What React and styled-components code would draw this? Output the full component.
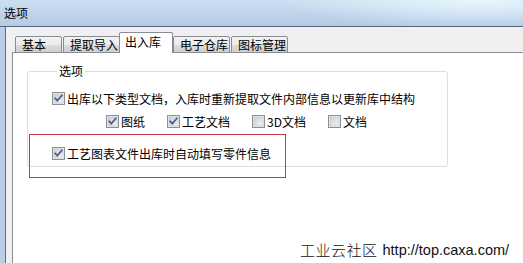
import React from 'react';
import styled, { createGlobalStyle } from 'styled-components';

const GlobalStyle = createGlobalStyle`
  html, body {
    margin: 0;
    padding: 0;
    width: 523px;
    height: 263px;
    overflow: hidden;
    background: #ffffff;
  }
  body {
    font-family: "Noto Sans CJK SC", "Liberation Sans", sans-serif;
    font-size: 12px;
    color: #000;
  }
`;

// ventana principal
const Window = styled.div`
  width: 523px;
  height: 263px;
  display: flex;
  flex-direction: column;
  position: relative;
  overflow: hidden;
`;

const TitleBar = styled.div`
  height: 26px;
  flex: none;
  display: flex;
  align-items: center;
  padding-left: 4px;
  border-bottom: 1px solid #59657a;
  background:
    radial-gradient(ellipse 200px 28px at 480px 0px, rgba(232, 247, 255, 0.95), rgba(232, 247, 255, 0) 100%),
    linear-gradient(to bottom, #cddff1 0%, #bcd2ea 60%, #b5cce6 100%);
  font-size: 12px;
  line-height: 14px;
`;

const Body = styled.div`
  flex: 1;
  display: flex;
  border-left: 5px solid #b9cfe7;
  background: #f0f0f0;
`;

const Client = styled.div`
  flex: 1;
  display: flex;
  flex-direction: column;
  border-left: 1px solid #5f6d82;
  padding: 6px 0 0 6px;
`;

const TabStrip = styled.div`
  display: flex;
  align-items: flex-end;
  height: 20px;
  padding-left: 3px;
  gap: 1px;
  position: relative;
  z-index: 1;
  margin-bottom: -1px;
`;

const Tab = styled.div`
  box-sizing: border-box;
  width: ${p => p.$w}px;
  height: ${p => (p.$active ? 21 : 17)}px;
  margin: ${p => (p.$active ? '0 -1px 0 -2px' : '0')};
  border: 1px solid #898c95;
  border-bottom: ${p => (p.$active ? 'none' : '1px solid #898c95')};
  border-radius: 2px 2px 0 0;
  background: ${p => (p.$active ? '#ffffff' : 'linear-gradient(to bottom, #f2f2f2 0%, #ebebeb 50%, #dddddd 51%, #cfcfcf 100%)')};
  display: flex;
  align-items: ${p => (p.$active ? 'flex-start' : 'center')};
  padding: ${p => (p.$active ? '2px 0 0 5px' : '0 0 0 6px')};
  font-size: 12px;
  line-height: 14px;
  white-space: nowrap;
`;

const Panel = styled.div`
  flex: 1;
  background: #ffffff;
  border: 1px solid #898c95;
  border-right: none;
  border-bottom: none;
  padding: 11px 0 0 14px;
  position: relative;
`;

const GroupBox = styled.fieldset`
  box-sizing: border-box;
  width: 421px;
  height: 103px;
  margin: 0;
  padding: 5px 0 0 24px;
  border: 1px solid #d5dfe5;
  border-radius: 3px;
  display: flex;
  flex-direction: column;
`;

const Legend = styled.legend`
  padding: 0 2px;
  margin-left: 5px;
  font-size: 12px;
  line-height: 14px;
`;

const Row = styled.div`
  display: flex;
  align-items: center;
  gap: ${p => p.$gap || 0}px;
  padding-left: ${p => p.$indent || 0}px;
  height: 15px;
  margin-top: ${p => p.$top || 0}px;
`;

const Check = styled.label`
  display: flex;
  align-items: center;
  gap: 2px;
  font-size: 12px;
  line-height: 14px;
  white-space: nowrap;
`;

const Box = styled.svg`
  width: 13px;
  height: 13px;
  flex: none;
`;

const Highlight = styled.div`
  position: absolute;
  left: 16px;
  top: 81px;
  width: 257px;
  height: 44px;
  box-sizing: border-box;
  border: 1px solid #c9383f;
`;

const Watermark = styled.div`
  position: absolute;
  left: 300px;
  top: 239px;
  display: flex;
  align-items: center;
  gap: 5px;
  white-space: nowrap;
  color: #111;
`;

const WmCn = styled.span`
  font-family: "Noto Sans CJK SC", sans-serif;
  font-size: 15px;
  font-weight: 300;
  letter-spacing: 0.5px;
`;

const WmUrl = styled.span`
  font-family: "Liberation Sans", Arial, sans-serif;
  font-size: 14.5px;
`;

function CheckBox({ checked }) {
  return (
    <Box viewBox="0 0 13 13">
      <defs>
        <linearGradient id={checked ? 'cbg1' : 'cbg0'} x1="0" y1="0" x2="1" y2="1">
          <stop offset="0" stopColor="#cbcfd5" />
          <stop offset="1" stopColor="#f6f6f6" />
        </linearGradient>
      </defs>
      <rect x="0.5" y="0.5" width="12" height="12" fill="#f4f4f4" stroke="#8e8f8f" />
      <rect x="2" y="2" width="9" height="9" fill={`url(#${checked ? 'cbg1' : 'cbg0'})`} stroke="#b4b8bf" strokeWidth="0.6" />
      {checked && (
        <path d="M3.2 6.4 L5.3 8.6 L9.8 3.4" fill="none" stroke="#4b5e96" strokeWidth="1.8" strokeLinecap="square" />
      )}
    </Box>
  );
}

const tabs = [
  { label: '基本', w: 47 },
  { label: '提取导入', w: 57 },
  { label: '出入库', w: 54, active: true },
  { label: '电子仓库', w: 57 },
  { label: '图标管理', w: 57 },
];

export default function App() {
  return (
    <>
      <GlobalStyle />
      <Window>
        <TitleBar>选项</TitleBar>
        <Body>
          <Client>
            <TabStrip>
              {tabs.map(t => (
                <Tab key={t.label} $w={t.w} $active={t.active}>{t.label}</Tab>
              ))}
            </TabStrip>
            <Panel>
              <GroupBox>
                <Legend>选项</Legend>
                <Row $top={8}>
                  <Check><CheckBox checked />出库以下类型文档，入库时重新提取文件内部信息以更新库中结构</Check>
                </Row>
                <Row $top={8} $indent={54} $gap={22}>
                  <Check><CheckBox checked />图纸</Check>
                  <Check><CheckBox checked />工艺文档</Check>
                  <Check><CheckBox />3D文档</Check>
                  <Check><CheckBox />文档</Check>
                </Row>
                <Row $top={17}>
                  <Check><CheckBox checked />工艺图表文件出库时自动填写零件信息</Check>
                </Row>
              </GroupBox>
              <Highlight />
            </Panel>
          </Client>
        </Body>
        <Watermark>
          <WmCn>工业云社区</WmCn>
          <WmUrl>http://top.caxa.com/</WmUrl>
        </Watermark>
      </Window>
    </>
  );
}
